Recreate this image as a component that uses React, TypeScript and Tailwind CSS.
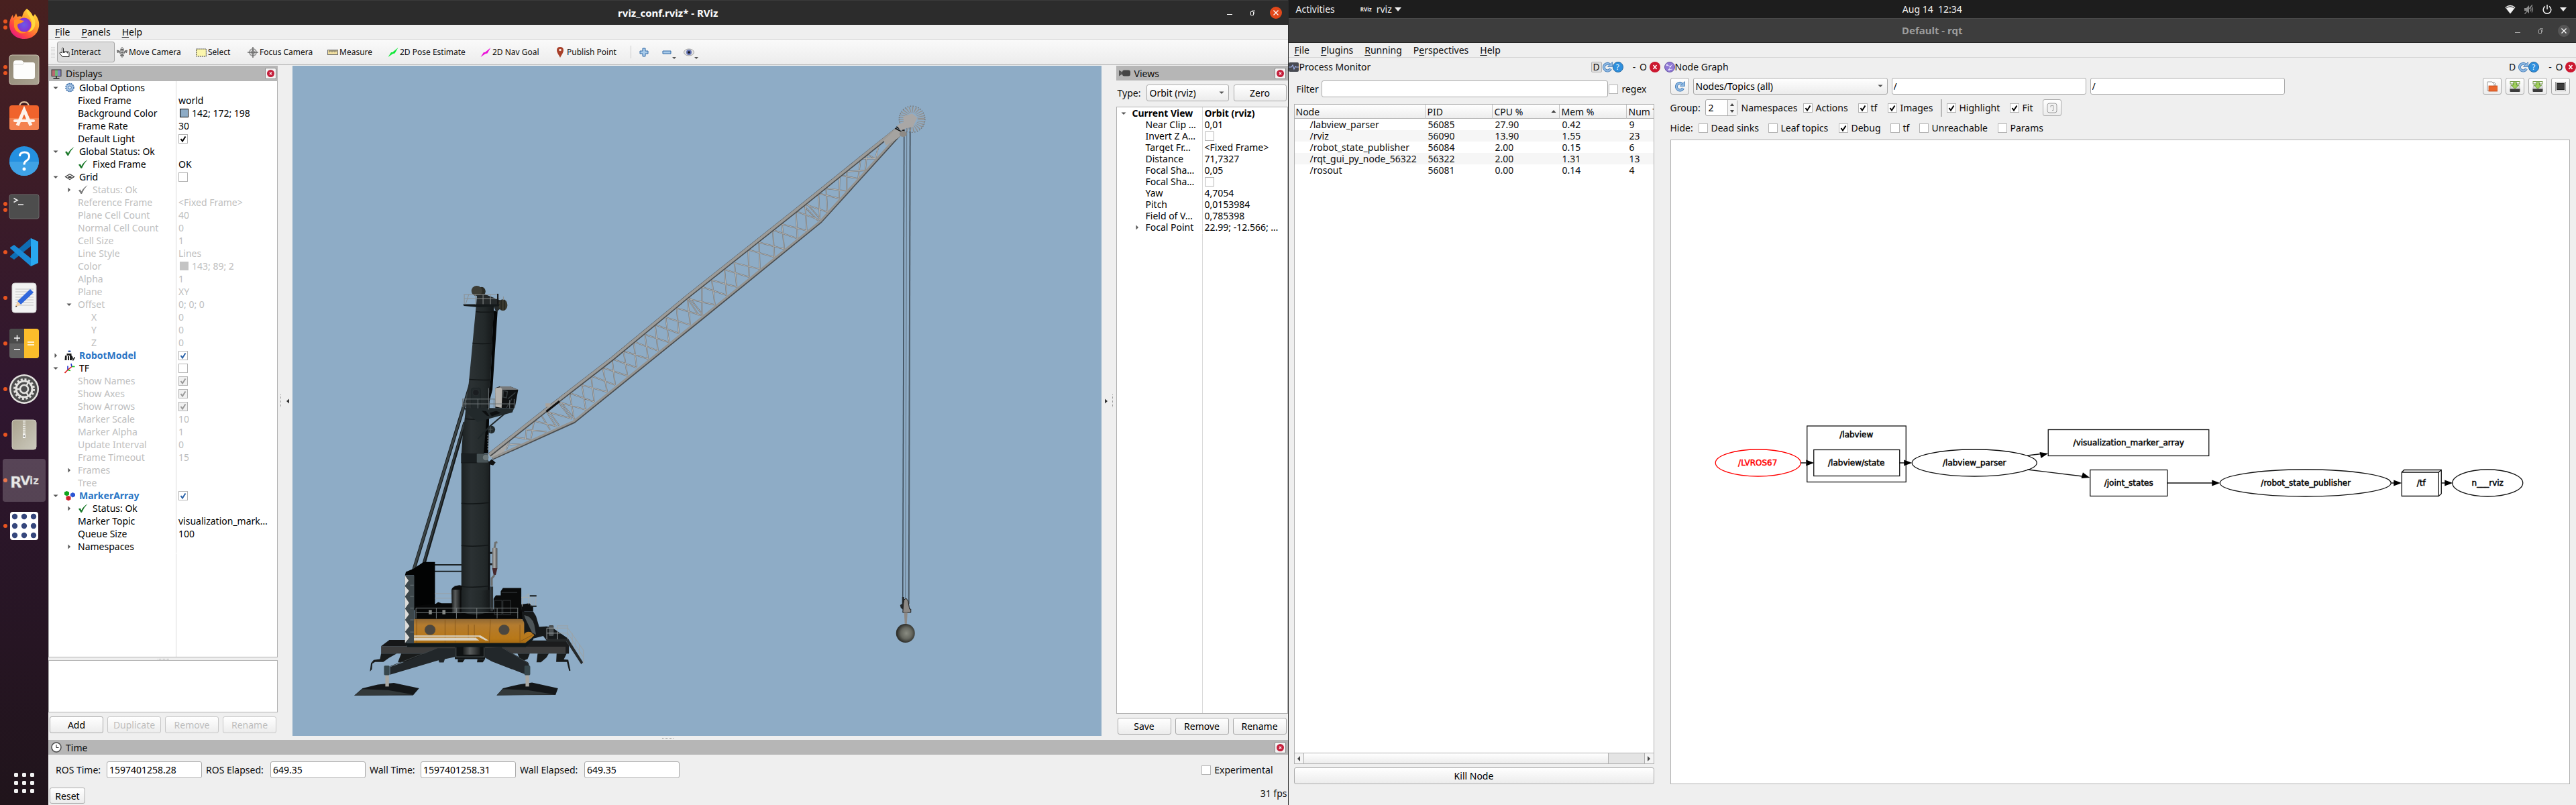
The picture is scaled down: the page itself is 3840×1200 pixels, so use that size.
import type { ReactNode } from "react";

/* ---------- shared controls ---------- */

const BTN =
  "rounded-[3px] border border-[#a9a9a9] bg-gradient-to-b from-white to-[#ececec] text-black disabled:border-[#c6c6c6] disabled:text-[#bebebe]";
const FIELD = "rounded-[3px] border border-[#a9a9a9] bg-white text-black";

function Tick({ label, checked, disabled, blue, name }: { label?: string; checked?: boolean; disabled?: boolean; blue?: boolean; name?: string }) {
  return (
    <label className="flex items-center gap-[5px] whitespace-nowrap">
      <span className="relative block h-[14px] w-[14px] shrink-0">
        <input
          type="checkbox"
          defaultChecked={checked}
          disabled={disabled}
          aria-label={label ? undefined : name}
          className="peer block h-[14px] w-[14px] appearance-none border border-[#b4b4b4] bg-white disabled:bg-[#f0f0f0]"
        />
        <svg
          viewBox="0 0 14 14"
          className={
            "pointer-events-none absolute inset-0 hidden h-[14px] w-[14px] peer-checked:block " +
            (disabled ? "text-[#9a9a9a]" : blue ? "text-[#2a62a8]" : "text-black")
          }
        >
          <path d="M3.5 7 L6 10.5 L10.5 3.5" fill="none" stroke="currentColor" strokeWidth="2" />
        </svg>
      </span>
      {label && <span>{label}</span>}
    </label>
  );
}

function Mn({ children }: { children: string }) {
  const i = children === "Perspectives" ? 1 : 0;
  return (
    <button className="whitespace-nowrap">
      {children.slice(0, i)}
      <span className="underline decoration-1 underline-offset-2">{children[i]}</span>
      {children.slice(i + 1)}
    </button>
  );
}

function PanelClose() {
  return (
    <button aria-label="Close panel" className="flex h-[17px] w-[17px] items-center justify-center rounded-[2px] border border-[#8c8c8c] bg-[#f4f4f4]">
      <svg viewBox="0 0 10 10" className="h-[11px] w-[11px]">
        <circle cx="5" cy="5" r="5" fill="#c4203c" />
        <path d="M3.5 3.5 L6.5 6.5 M6.5 3.5 L3.5 6.5" stroke="#fff" strokeWidth="1.2" />
      </svg>
    </button>
  );
}

function Arrow({ open }: { open?: boolean }) {
  return (
    <svg viewBox="0 0 8 8" className="h-2 w-2">
      <path d={open ? "M0.5 2.5 H7.5 L4 6 Z" : "M2.5 0.5 V7.5 L6 4 Z"} fill="#555" />
    </svg>
  );
}

function Dots({ vertical }: { vertical?: boolean }) {
  return <span className={vertical ? "h-[19px] w-px border-l border-dotted border-[#9c9c9c]" : "h-px w-[17px] border-t border-dotted border-[#9c9c9c]"} />;
}

/* ---------- property tree ---------- */

type Row = {
  n: string;
  lv?: 0 | 1 | 2;
  a?: "open" | "shut";
  icon?: "gear" | "ok" | "okgray" | "grid" | "robot" | "tf" | "markers";
  v?: string;
  sw?: string;
  tick?: "on" | "off" | "dis" | "blue";
  dis?: boolean;
  bold?: boolean;
  blue?: boolean;
};

const DISPLAYS: Row[] = [
  { n: "Global Options", lv: 0, a: "open", icon: "gear" },
  { n: "Fixed Frame", lv: 1, v: "world" },
  { n: "Background Color", lv: 1, v: "142; 172; 198", sw: "border border-black bg-[#8eacc6]" },
  { n: "Frame Rate", lv: 1, v: "30" },
  { n: "Default Light", lv: 1, tick: "on" },
  { n: "Global Status: Ok", lv: 0, a: "open", icon: "ok" },
  { n: "Fixed Frame", lv: 1, icon: "ok", v: "OK" },
  { n: "Grid", lv: 0, a: "open", icon: "grid", tick: "off" },
  { n: "Status: Ok", lv: 1, a: "shut", icon: "okgray", dis: true },
  { n: "Reference Frame", lv: 1, v: "<Fixed Frame>", dis: true },
  { n: "Plane Cell Count", lv: 1, v: "40", dis: true },
  { n: "Normal Cell Count", lv: 1, v: "0", dis: true },
  { n: "Cell Size", lv: 1, v: "1", dis: true },
  { n: "Line Style", lv: 1, v: "Lines", dis: true },
  { n: "Color", lv: 1, v: "143; 89; 2", sw: "bg-[#c4c4c4]", dis: true },
  { n: "Alpha", lv: 1, v: "1", dis: true },
  { n: "Plane", lv: 1, v: "XY", dis: true },
  { n: "Offset", lv: 1, a: "open", v: "0; 0; 0", dis: true },
  { n: "X", lv: 2, v: "0", dis: true },
  { n: "Y", lv: 2, v: "0", dis: true },
  { n: "Z", lv: 2, v: "0", dis: true },
  { n: "RobotModel", lv: 0, a: "shut", icon: "robot", tick: "blue", bold: true, blue: true },
  { n: "TF", lv: 0, a: "open", icon: "tf", tick: "off" },
  { n: "Show Names", lv: 1, tick: "dis", dis: true },
  { n: "Show Axes", lv: 1, tick: "dis", dis: true },
  { n: "Show Arrows", lv: 1, tick: "dis", dis: true },
  { n: "Marker Scale", lv: 1, v: "10", dis: true },
  { n: "Marker Alpha", lv: 1, v: "1", dis: true },
  { n: "Update Interval", lv: 1, v: "0", dis: true },
  { n: "Frame Timeout", lv: 1, v: "15", dis: true },
  { n: "Frames", lv: 1, a: "shut", dis: true },
  { n: "Tree", lv: 1, dis: true },
  { n: "MarkerArray", lv: 0, a: "open", icon: "markers", tick: "blue", bold: true, blue: true },
  { n: "Status: Ok", lv: 1, a: "shut", icon: "ok" },
  { n: "Marker Topic", lv: 1, v: "visualization_mark…" },
  { n: "Queue Size", lv: 1, v: "100" },
  { n: "Namespaces", lv: 1, a: "shut" },
];

const VIEWS: Row[] = [
  { n: "Current View", lv: 0, a: "open", v: "Orbit (rviz)", bold: true },
  { n: "Near Clip …", lv: 1, v: "0,01" },
  { n: "Invert Z A…", lv: 1, tick: "off" },
  { n: "Target Fr…", lv: 1, v: "<Fixed Frame>" },
  { n: "Distance", lv: 1, v: "71,7327" },
  { n: "Focal Sha…", lv: 1, v: "0,05" },
  { n: "Focal Sha…", lv: 1, tick: "off" },
  { n: "Yaw", lv: 1, v: "4,7054" },
  { n: "Pitch", lv: 1, v: "0,0153984" },
  { n: "Field of V…", lv: 1, v: "0,785398" },
  { n: "Focal Point", lv: 1, a: "shut", v: "22.99; -12.566; …" },
];

const INDENT = ["pl-0", "pl-5", "pl-10"];

function RowIcon({ kind }: { kind: NonNullable<Row["icon"]> }) {
  return (
    <svg viewBox="0 0 16 16" className="h-4 w-4">
      {kind === "gear" && (
        <g>
          <circle cx="8" cy="7.5" r="6" fill="#8fb4dc" stroke="#3f6fa8" strokeWidth="1.6" strokeDasharray="2 1.2" />
          <circle cx="8" cy="7.5" r="4.6" fill="#a9c6e6" />
          <circle cx="8" cy="7.5" r="2.4" fill="#dfeaf6" stroke="#3f6fa8" />
        </g>
      )}
      {(kind === "ok" || kind === "okgray") && (
        <path d="M1 8.5 L3.6 7.4 L5.4 10.4 Q8.5 4.5 14.5 1 Q9 6.5 6 14 L4.6 14 Z" fill={kind === "ok" ? "#1d7a2c" : "#7b7b7b"} />
      )}
      {kind === "grid" && (
        <path d="M1.5 7.5 L8 3.5 L14.5 7.5 L8 11.5 Z M4.7 5.5 L11.3 9.5 M11.3 5.5 L4.7 9.5" fill="none" stroke="#3a3a3a" strokeWidth="1.2" />
      )}
      {kind === "robot" && (
        <g fill="#1b1b1b">
          <rect x="5.5" y="0.5" width="4" height="2.6" rx="1" fill="#34539c" />
          <rect x="3.5" y="5" width="7" height="3" />
          <path d="M1 8 h2.5 v7 H0.5 Z M5 9 h2 v6 H5 Z M8 8 h3 v7 H8 Z" />
          <path d="M11 9 L13 14.5 L15.5 10.5" fill="none" stroke="#1b1b1b" strokeWidth="1.6" />
        </g>
      )}
      {kind === "tf" && (
        <g fill="none" strokeWidth="1.6">
          <path d="M0.5 15 L5 10.5" stroke="#e01818" />
          <path d="M5 10.5 V4.5" stroke="#2030d0" />
          <path d="M5 10.5 L9 11.5" stroke="#18c018" />
          <path d="M5 10.5 L11 5.5" stroke="#e01818" />
          <path d="M11 5.5 L10 1" stroke="#2030d0" />
          <path d="M11 5.5 H15.5" stroke="#18c018" />
        </g>
      )}
      {kind === "markers" && (
        <g>
          <path d="M0 2.5 L3.5 1 L7 2.5 V6.5 L3.5 8.5 L0 6.5 Z" fill="#12a41c" />
          <path d="M9 5 L12.5 3 L16 5 V8.5 L12.5 10.5 L9 8.5 Z" fill="#2c55d4" />
          <path d="M2.5 9.5 L6 8 L9.5 9.5 V13.5 L6 15.5 L2.5 13.5 Z" fill="#cf1f2c" />
        </g>
      )}
    </svg>
  );
}

function Tree({ rows, rowH, nameW, edge }: { rows: Row[]; rowH: string; nameW: string; edge: string }) {
  return (
    <div role="tree" className={"flex flex-1 flex-col border-[#b0b0b0] bg-white " + edge}>
      {rows.map((r, i) => (
        <div
          key={i}
          role="treeitem"
          className={"flex " + rowH + (r.dis ? " text-[#bebebe]" : " text-black") + (r.bold ? " font-bold" : "")}
        >
          <div className={"flex shrink-0 items-center overflow-hidden whitespace-nowrap border-r border-[#d9d9d9] " + nameW + " " + INDENT[r.lv ?? 0]}>
            <span className="flex w-5 shrink-0 justify-center">{r.a && <Arrow open={r.a === "open"} />}</span>
            {r.icon && (
              <span className="flex w-[22px] shrink-0 justify-center">
                <RowIcon kind={r.icon} />
              </span>
            )}
            <span className={"pl-[3px] " + (r.blue ? "text-[#2a76c6]" : "")}>{r.n}</span>
          </div>
          <div className="flex min-w-0 flex-1 items-center overflow-hidden whitespace-nowrap pl-[3px]">
            {r.sw && <span className={"mr-[5px] ml-[2px] h-[13px] w-[13px] " + r.sw} />}
            {r.v}
            {r.tick && <Tick name={r.n} checked={r.tick !== "off"} disabled={r.tick === "dis"} blue={r.tick === "blue"} />}
          </div>
        </div>
      ))}
      <div className="flex flex-1 pt-px">
        <div className={"border-r border-[#d9d9d9] " + nameW} />
      </div>
    </div>
  );
}

/* ---------- launcher ---------- */

function DockIcon({ kind }: { kind: string }) {
  return (
    <svg viewBox="0 0 48 48" className="h-12 w-12">
      <defs>
        <linearGradient id="ffo" x1="1" y1="0" x2="0.2" y2="1">
          <stop offset="0" stopColor="#fff14a" />
          <stop offset="0.45" stopColor="#ff9a2a" />
          <stop offset="0.75" stopColor="#ff4a3f" />
          <stop offset="1" stopColor="#e3128a" />
        </linearGradient>
        <radialGradient id="ffp">
          <stop offset="0" stopColor="#6a5be8" />
          <stop offset="1" stopColor="#8a2fd0" />
        </radialGradient>
        <linearGradient id="sand" x1="0" y1="0" x2="1" y2="1">
          <stop offset="0" stopColor="#8f8672" />
          <stop offset="1" stopColor="#aaa392" />
        </linearGradient>
        <linearGradient id="zip" x1="0" y1="0" x2="1" y2="1">
          <stop offset="0" stopColor="#aaa38e" />
          <stop offset="1" stopColor="#cbc9bd" />
        </linearGradient>
      </defs>
      {kind === "firefox" && (
        <g>
          <path d="M28 1 C33 5 36 8 37 13 L40 9 C45 15 47 21 46 28 C44 40 35 46 24 46 C11 46 2 37 2 25 C2 19 4 14 7 10 L8 15 L12 8 L14 13 C16 12 19 12 21 13 C22 8 24 4 28 1 Z" fill="url(#ffo)" />
          <circle cx="24" cy="25" r="10.5" fill="url(#ffp)" />
          <path d="M9 18 C14 15 18 18 24 19 C21 23 17 22 14 25 C14 33 20 36 27 36 C20 40 11 36 9 28 Z" fill="#ff8f22" />
          <path d="M28 1 C26 8 34 13 35 20 C37 28 33 33 29 36 C38 35 42 27 40 18 C38 11 32 7 28 1 Z" fill="#ffd83c" />
        </g>
      )}
      {kind === "files" && (
        <g>
          <rect x="2" y="2" width="44" height="44" rx="4" fill="url(#sand)" stroke="#c9c2b1" />
          <path d="M8 14 q0 -4 4 -4 h8 q2 0 3 3 h14 q3 0 3 3 v18 q0 4 -4 4 H12 q-4 0 -4 -4 Z" fill="#fdfdfc" />
          <path d="M9 16 h13 l2 -2" fill="none" stroke="#d6d6d2" />
        </g>
      )}
      {kind === "software" && (
        <g>
          <path d="M17 12 q0 -8 7 -8 q7 0 7 8" fill="none" stroke="#e9c9a6" strokeWidth="2" />
          <rect x="2" y="9" width="44" height="37" rx="4" fill="#f0632c" />
          <path d="M2 28 h44 v14 q0 4 -4 4 H6 q-4 0 -4 -4 Z" fill="#f4824f" />
          <path d="M14 39 L24 16 L34 39" fill="none" stroke="#fdf3ec" strokeWidth="5" />
          <path d="M10 32 H38" stroke="#fdf3ec" strokeWidth="4" strokeLinecap="round" />
        </g>
      )}
      {kind === "help" && (
        <g>
          <circle cx="24" cy="24" r="22" fill="#2490e0" />
          <path d="M2 25 a22 21 0 0 0 44 0 Z" fill="#3fa2e6" />
          <path d="M17.5 17 q0 -6 7 -6 q7 0 7 6 q0 4 -4 6.5 q-3.5 2 -3.5 6" fill="none" stroke="#fff" strokeWidth="3" />
          <circle cx="24" cy="36" r="2.5" fill="#fff" />
        </g>
      )}
      {kind === "terminal" && (
        <g>
          <rect x="2" y="6" width="44" height="36" rx="3" fill="#4d4d4d" stroke="#6b6b6b" />
          <path d="M8.5 11.5 L14 14.5 L8.5 17.5 M15 21 h8" fill="none" stroke="#eee" strokeWidth="1.6" />
        </g>
      )}
      {kind === "code" && (
        <g>
          <path d="M34 3 L45 8 V40 L34 45 Z" fill="#29a8f0" />
          <path d="M34 3 L34 15 L9 35 L3 31 L3 30 Z" fill="#0f6db3" />
          <path d="M34 45 V33 L9 13 L3 17 V18 Z" fill="#1a8ad6" />
        </g>
      )}
      {kind === "edit" && (
        <g>
          <rect x="6" y="2" width="36" height="44" rx="4" fill="#f2f2f2" stroke="#cfcfcf" />
          <path d="M11 11 h27 M11 15 h27 M11 19 h27 M11 23 h27 M11 27 h27 M11 31 h27 M11 35 h27" stroke="#c3c3c3" />
          <path d="M33 11 L38 16 L19 34 L14 29 Z" fill="#3067dc" />
          <path d="M14 29 L19 34 L11 38 Z" fill="#f2cfa6" />
          <path d="M12 35.5 L13.5 37 L11 38 Z" fill="#222" />
        </g>
      )}
      {kind === "calc" && (
        <g>
          <rect x="2" y="2" width="44" height="44" rx="4" fill="#616161" />
          <path d="M6 2 h18 v22 H2 V6 q0 -4 4 -4" fill="#4b4b4b" />
          <path d="M24 2 h18 q4 0 4 4 v36 q0 4 -4 4 H24 Z" fill="#fbbd2b" />
          <path d="M9 16 h9 M13.5 11.5 v9 M9 33 h9 M29 22 h10 M29 26 h10" stroke="#fff" strokeWidth="1.4" />
        </g>
      )}
      {kind === "settings" && (
        <g>
          <circle cx="24" cy="24" r="22" fill="#e4e3e0" />
          <circle cx="24" cy="24" r="19.5" fill="#4d4d4d" />
          <circle cx="24" cy="24" r="12" fill="none" stroke="#e4e3e0" strokeWidth="3" />
          <circle cx="24" cy="24" r="14.5" fill="none" stroke="#e4e3e0" strokeWidth="3" strokeDasharray="3 2.7" />
          <circle cx="24" cy="24" r="6" fill="none" stroke="#e4e3e0" strokeWidth="2.6" />
          <path d="M19 24 H12 M27 20 L30 14 M27 28 L30 34" stroke="#e4e3e0" strokeWidth="2.4" />
        </g>
      )}
      {kind === "zip" && (
        <g>
          <rect x="6" y="2" width="36" height="44" rx="4" fill="url(#zip)" stroke="#cfccc0" />
          <path d="M24 3 V22" stroke="#efefe9" strokeWidth="4" strokeDasharray="1.5 1.2" />
          <rect x="22" y="22" width="4" height="7" fill="#f7f7f4" />
          <rect x="23.2" y="25" width="1.6" height="2" fill="#777" />
        </g>
      )}
      {kind === "rviz" && (
        <g fontFamily="DejaVu Sans" fontWeight="bold">
          <text x="3" y="35" fontSize="23" fill="#e9e9e9" stroke="#8f8f8f" strokeWidth="0.5">R</text>
          <text x="18" y="31" fontSize="20" fill="#e9e9e9" stroke="#8f8f8f" strokeWidth="0.5">V</text>
          <text x="32" y="30" fontSize="15" fill="#dcdcdc">iz</text>
        </g>
      )}
      {kind === "rqt" && (
        <g>
          <rect x="3" y="3" width="42" height="42" rx="4" fill="#fff" />
          {[10, 24, 38].map((y) => [10, 24, 38].map((x) => <circle key={x + "-" + y} cx={x} cy={y} r="4.2" fill="#35467c" />))}
        </g>
      )}
    </svg>
  );
}

const DOCK: [string, string, number][] = [
  ["firefox", "Firefox", 2],
  ["files", "Files", 2],
  ["software", "Ubuntu Software", 0],
  ["help", "Help", 0],
  ["terminal", "Terminal", 2],
  ["code", "Visual Studio Code", 1],
  ["edit", "Text Editor", 1],
  ["calc", "Calculator", 1],
  ["settings", "Settings", 1],
  ["zip", "Archive Manager", 1],
  ["rviz", "RViz", 1],
  ["rqt", "rqt", 1],
];

function Dock() {
  return (
    <nav className="flex w-[72px] shrink-0 flex-col bg-gradient-to-b from-[#48201f] via-[#2f162f] to-[#20141b] pt-[2px]">
      {DOCK.map(([kind, label, dots]) => (
        <button key={kind} aria-label={label} className="flex h-[68px] items-center">
          <span className="flex w-[11px] shrink-0 flex-col items-end gap-[3px]">
            {dots > 0 && <span className="h-[6px] w-[6px] rounded-full bg-[#e95420]" />}
            {dots > 1 && <span className="h-[6px] w-[6px] rounded-full bg-[#e95420]" />}
          </span>
          <span className={"-ml-[7px] flex h-[64px] w-[64px] items-center justify-center rounded-[4px] " + (kind === "rviz" ? "bg-white/20" : "")}>
            <DockIcon kind={kind} />
          </span>
        </button>
      ))}
      <button aria-label="Show Applications" className="mt-auto mb-[18px] flex justify-center">
        <svg viewBox="0 0 30 30" className="h-[30px] w-[30px]">
          {[0, 12, 24].map((y) => [0, 12, 24].map((x) => <rect key={x + "-" + y} x={x} y={y} width="6" height="6" rx="1.5" fill="#f2f2f2" />))}
        </svg>
      </button>
    </nav>
  );
}

/* ---------- 3D view ---------- */

const TOP: [number, number][] = [[325,1232],[365,1200],[395,1163],[433,1130],[463,1095],[500,1063],[533,1025],[570,997],[603,957],[637,928],[673,890],[708,852],[755,805],[787,778],[828,735],[860,708],[905,655],[940,625],[985,575],[1015,552],[1060,500],[1090,472],[1133,428],[1158,408],[1202,355],[1225,340],[1270,288],[1290,270],[1330,228]];
const BOT: [number, number][] = [[340,1340],[378,1300],[405,1268],[447,1228],[473,1200],[513,1163],[543,1130],[580,1095],[612,1062],[648,1028],[680,992],[717,958],[755,920],[797,877],[835,838],[868,805],[908,765],[943,733],[990,685],[1022,652],[1065,610],[1095,578],[1138,535],[1162,503],[1200,448],[1225,418],[1262,368],[1285,335],[1318,288]];

const LATTICE = TOP.map((t, i) => {
  const steep = BOT[i];
  const flat = BOT[Math.min(i + 2, BOT.length - 1)];
  return `M${t[0]} ${t[1]} L${steep[0]} ${steep[1]} M${t[0]} ${t[1]} L${flat[0]} ${flat[1]}`;
}).join(" ");

const JOINTS =
  " M288 1268 L332 1338 M296 1268 L342 1338 M708 850 L745 920 M714 848 L758 918 M1085 478 L1132 538 M1096 470 L1140 532 M250 1307 L282 1368 M256 1303 L292 1365 M250 1307 L330 1335 M288 1268 L378 1300 M210 1345 L200 1415 M210 1345 L285 1367 M185 1380 L250 1388 M145 1410 L200 1420 M185 1380 L182 1420 M235 1325 L262 1380 M130 1425 L120 1460 M130 1440 L165 1438";

function Boom() {
  const v = { vectorEffect: "non-scaling-stroke" as const, fill: "none" };
  return (
    <g transform="translate(700 130) scale(0.45918 0.3699)">
      <path {...v} d={LATTICE + JOINTS} stroke="#6f7377" strokeWidth="2" />
      <path {...v} d={LATTICE + JOINTS} stroke="#b4b2ae" strokeWidth="1" />
      <path d="M62 1482 L130 1425 L112 1470 L75 1496 Z" fill="#a9a8a6" />
      <path {...v} d="M75 1497 L340 1349 L760 927 L1140 543 L1402 185" stroke="#4a4d4f" strokeWidth="4" />
      <path {...v} d="M75 1494 L340 1345 L760 923 L1140 539 L1400 183" stroke="#969592" strokeWidth="3" />
      <path {...v} d="M65 1482 L250 1300 L463 1095 L705 847 L1060 497 L1270 287 L1386 172" stroke="#4a4d4f" strokeWidth="6" />
      <path {...v} d="M64 1480 L250 1298 L463 1093 L705 845 L1060 495 L1270 285 L1385 170" stroke="#9c9b98" strokeWidth="4" />
      <path {...v} d="M250 1307 L292 1266" stroke="#111" strokeWidth="3" />
      <rect x="247" y="1274" width="16" height="14" fill="#a9a39c" />
      <path d="M1345 215 L1385 168 L1412 182 L1392 205 L1352 235 Z" fill="#a5a3a0" />
      <g transform="translate(1437 129)">
        <ellipse rx="30" ry="38" fill="none" stroke="#938e8a" strokeWidth="24" strokeDasharray="3 5" />
        <ellipse rx="42" ry="53" fill="none" stroke="#6f6f6e" strokeWidth="3" strokeDasharray="4 5" />
      </g>
      <path {...v} d="M1382 165 L1408 182 M1386 160 L1412 176" stroke="#1a1a1a" strokeWidth="2" />
      <path d="M1388 155 L1410 140 L1408 118 L1437 106 L1454 122 L1440 160 L1420 165 L1400 175 Z" fill="#a9a7a6" />
      <ellipse cx="1408" cy="188" rx="12" ry="12" fill="#8d8a86" />
    </g>
  );
}

function Tower() {
  const v = { vectorEffect: "non-scaling-stroke" as const, fill: "none" };
  return (
    <g transform="translate(500 400) scale(0.33333 0.42092)">
      {/* backstays */}
      <path {...v} d="M612 393 L350 1070" stroke="#15191b" strokeWidth="5" />
      <path {...v} d="M612 393 L350 1068" stroke="#3b4446" strokeWidth="3" />
      <path {...v} d="M580 545 L395 1050" stroke="#15191b" strokeWidth="5" />
      <path {...v} d="M578 545 L394 1048" stroke="#343c3e" strokeWidth="2" />
      <path {...v} d="M395 1050 H565 M345 1073 H590" stroke="#1d2426" strokeWidth="2" />
      {/* mast */}
      <path d="M630 132 H710 L694 400 L666 660 L692 690 V1225 H564 V660 L569 600 L598 400 Z" fill="url(#mast)" />
      <path d="M708 150 L726 150 L703 430 L690 470 L684 655 H664 L680 500 L694 400 Z" fill="#050606" />
      <path d="M688 690 H692 V1215 H684 Z" fill="#0b0d0e" />
      <path {...v} d="M628 153 q45 4 82 0 M614 265 q45 4 86 0 M600 393 q50 4 92 2 M582 533 q50 4 90 0 M564 832 q60 5 124 -2 M564 982 q60 5 126 -2 M564 1127 q60 5 126 -2" stroke="#121617" strokeWidth="1.5" />
      <rect x="564" y="657" width="72" height="32" fill="#1a1f21" stroke="#0c0e0f" />
      <rect x="633" y="657" width="50" height="31" fill="#485356" />
      <ellipse cx="673" cy="670" rx="13" ry="10" fill="#6f7a7c" />
      <path d="M688 684 L700 676 L717 688 L706 698 L688 694 Z" fill="#101112" />
      {/* mast head */}
      <ellipse cx="655" cy="82" rx="17" ry="16" fill="#2b2c26" />
      <ellipse cx="633" cy="80" rx="24" ry="18" fill="#3d3d35" />
      <path d="M634 95 L670 92 L735 112 L764 116 L760 148 L735 145 L720 155 L708 134 H630 Z" fill="#25292a" />
      <ellipse cx="750" cy="130" rx="20" ry="20" fill="#3a392f" />
      <path {...v} d="M742 112 v36 M756 112 v36" stroke="#1b1b18" strokeWidth="1" />
      <path d="M572 127 H735 L732 134 L640 138 L575 133 Z" fill="#14191a" />
      <path {...v} d="M575 93 H730 M577 108 H735 M577 93 V127 M597 93 L583 127 M627 93 V127 M661 93 V127 M694 93 V127 M727 93 V127 M752 100 V112" stroke="#8c9090" strokeWidth="1" />
      <path {...v} d="M727 90 V128" stroke="#111" strokeWidth="2" />
      {/* cab */}
      <rect x="608" y="424" width="42" height="72" rx="8" fill="#22292b" stroke="#14191a" />
      <ellipse cx="629" cy="440" rx="14" ry="11" fill="#1a1d20" stroke="#3a3f40" />
      <path d="M715 424 L735 418 H782 L818 430 L803 495 H716 Z" fill="#101213" />
      <path d="M715 424 L748 420 L744 494 L716 490 Z" fill="#b4b2ae" />
      <path d="M735 418 H782 L818 430 L750 430 Z" fill="#77797a" />
      <path {...v} d="M752 433 L770 436 L766 458 L750 456 Z M772 462 L806 440 M765 495 L790 462" stroke="#343a3c" strokeWidth="1.5" />
      <path d="M578 495 H800 L792 510 L715 527 L636 544 L586 510 Z" fill="#22292b" />
      <path d="M690 512 L720 505 L740 512 L700 524 Z M655 504 l20 2 l15 18 l-12 -2 z" fill="#0d0f10" />
      <path {...v} d="M568 463 H715 M568 480 H800 M570 463 V492 M584 463 V492 M638 463 V496 M710 463 V496 M686 424 V500 M780 466 V496 M800 463 V496" stroke="#6e7577" strokeWidth="1" />
      <path {...v} d="M762 512 L690 560 L638 604" stroke="#1f2628" strokeWidth="2" />
      <ellipse cx="698" cy="571" rx="17" ry="14" fill="#22292b" />
      <path {...v} d="M686 570 h18 M694 560 v22" stroke="#596264" strokeWidth="1" />
      <path {...v} d="M682 590 V645 M689 590 V645" stroke="#9aa2a5" strokeWidth="1" strokeDasharray="2 2" />
      {/* chassis */}
      <path d="M205 1338 H1045 V1364 H205 Z" fill="#3c3c3c" />
      <path d="M205 1338 L242 1316 H320 V1338 Z" fill="#161718" />
      <path d="M820 1340 L880 1318 H1030 L1045 1335 V1364 L1030 1364 V1340 Z" fill="#1b1c1d" />
      <path d="M205 1364 H275 L240 1380 L215 1394 L178 1394 L166 1400 L164 1420 L155 1428 L160 1398 L172 1387 L200 1384 Z" fill="#191b1b" />
      <path d="M295 1364 H420 L340 1395 L280 1395 Z M815 1364 H870 L860 1384 L830 1392 Z M905 1364 H955 L945 1378 L920 1395 H900 Z M990 1364 H1035 L1022 1385 L1042 1386 L1052 1424 L1046 1426 L1036 1394 H988 Z" fill="#191b1b" />
      <path d="M456 1345 H536 V1376 L490 1384 L485 1396 H465 L462 1388 L245 1439 V1412 L330 1388 Z" fill="#22272a" />
      <path d="M668 1345 L745 1342 L862 1395 L870 1412 L850 1438 L700 1392 L668 1378 Z" fill="#22272a" />
      <path {...v} d="M245 1410 L456 1345 M745 1343 L866 1400" stroke="#3a4144" strokeWidth="1" />
      <path d="M548 1384 H580 L570 1395 H548 Z M636 1384 H670 L660 1395 H634 Z" fill="#151717" />
      <rect x="535" y="1340" width="135" height="44" fill="#0f1213" />
      <rect x="572" y="1340" width="76" height="28" fill="url(#cyl)" />
      <path {...v} d="M540 1342 V1378 M540 1376 H666 M666 1342 V1378" stroke="#5b6467" strokeWidth="1" />
      {/* outriggers */}
      <path d="M85 1513 L122 1487 L190 1474 L262 1468 L375 1487 L348 1512 Z M722 1512 L750 1487 L820 1474 L880 1467 L996 1487 L985 1511 Z" fill="#141719" />
      <path d="M85 1513 L122 1490 L236 1494 L350 1510 Z M722 1512 L750 1490 L860 1494 L985 1510 Z" fill="#33393a" />
      <rect x="224" y="1436" width="16" height="45" fill="#aaa9a4" />
      <rect x="851" y="1436" width="16" height="45" fill="#aaa9a4" />
      <rect x="218" y="1407" width="25" height="34" rx="4" fill="#37474c" />
      <rect x="846" y="1407" width="26" height="34" rx="4" fill="#37474c" />
      {/* counterweight */}
      <path d="M312 1087 L316 1075 L350 1064 L395 1040 H446 V1210 H352 V1087 Z" fill="#020303" />
      <rect x="312" y="1088" width="41" height="239" fill="#3d474b" />
      <path d="M312 1088 l16 18 l-16 18 z M312 1126 l18 16 l-18 20 z M312 1163 l18 22 l-18 20 z M312 1205 l18 20 l-18 20 z M312 1245 l20 22 l-20 20 z M312 1287 l20 20 l-20 20 z" fill="#dcdcda" />
      <path {...v} d="M335 1122 h16 M335 1162 h16 M335 1203 h16 M335 1245 h16 M335 1288 h16" stroke="#6d777a" strokeWidth="1" />
      {/* deck equipment */}
      <path {...v} d="M445 1152 H525 M445 1168 H525" stroke="#9aa1a3" strokeWidth="1" />
      <path d="M355 1195 L450 1188 L460 1182 L475 1186 H640 L708 1208 H845 V1243 H355 Z" fill="#060707" />
      <path d="M520 1138 Q522 1126 555 1122 L566 1124 V1225 H522 Z" fill="#0b0c0c" />
      <rect x="522" y="1138" width="36" height="82" fill="url(#cyl)" />
      <path d="M564 1140 H692 V1215 Q630 1235 564 1218 Z" fill="url(#mast)" />
      <path d="M740 1144 L750 1132 H832 V1215 H740 Z M708 1170 L718 1158 H818 V1232 H708 Z" fill="#0a0b0b" />
      <path {...v} d="M712 1176 h33 v50 h-33 z M750 1176 h35 v50 h-35 z M744 1148 h70" stroke="#34383a" strokeWidth="1" />
      <path {...v} d="M712 992 L716 972 L725 970" stroke="#6f7170" strokeWidth="3" />
      <rect x="702" y="990" width="23" height="74" rx="3" fill="url(#steel)" />
      <path d="M702 1062 H725 L718 1086 H708 Z" fill="#47282b" />
      <path {...v} d="M713 1086 L700 1098 V1125" stroke="#6c6f70" strokeWidth="3" />
      <path {...v} d="M700 1127 V1215" stroke="#2c3133" strokeWidth="4" />
      <path {...v} d="M690 1008 h12 M690 1048 h12" stroke="#1c2022" strokeWidth="3" />
      <path {...v} d="M361 1203 H818 M361 1220 H818 M361 1203 V1240 M452 1203 V1240 M542 1203 V1240 M633 1203 V1240 M724 1203 V1240 M816 1203 V1240" stroke="#757b7c" strokeWidth="1" />
      <path d="M418 1210 h14 v15 h-14 z M479 1210 h14 v15 h-14 z" fill="#858885" />
      <path d="M832 1190 L868 1186 L885 1200 V1215 H832 Z" fill="#0c0d0e" />
      <path {...v} d="M836 1198 V1170 L865 1152 V1190 M832 1165 H870 M875 1162 V1196 M885 1162 V1196 M897 1162 V1196" stroke="#a7abab" strokeWidth="1" />
      <path {...v} d="M870 1160 H900 M872 1197 H900" stroke="#15191a" strokeWidth="2" />
      {/* machinery house */}
      <path d="M834 1215 H885 L898 1232 L912 1270 L945 1268 L970 1272 L1040 1310 L1045 1318 H945 L930 1302 L890 1310 L845 1300 Z" fill="#16191a" />
      <path d="M845 1228 Q880 1232 890 1262 L898 1298 L880 1290 L850 1240 Z" fill="#4c5457" />
      <path d="M352 1242 H830 Q846 1246 845 1262 V1298 Q850 1284 875 1288 L890 1300 L850 1328 H352 Z" fill="url(#orange)" />
      <path {...v} d="M364 1244 V1325 M491 1244 V1325 M536 1244 V1325 M595 1262 V1318 M622 1262 V1318 M694 1244 L689 1325 M826 1262 V1325 M830 1320 L888 1296" stroke="#8a5a1c" strokeWidth="1" />
      <path d="M352 1300 H650 L686 1318 H672 L640 1305 H352 Z M352 1308 H628 L644 1318 H352 Z" fill="#d9d3c4" />
      <ellipse cx="424" cy="1280" rx="24" ry="18" fill="#4b4740" stroke="#7a5a2c" />
      <ellipse cx="755" cy="1280" rx="24" ry="18" fill="#4b4740" stroke="#7a5a2c" />
      <path d="M315 1327 H850 L890 1302 L886 1314 L852 1341 H322 Z" fill="#10181a" />
      {/* access stairs */}
      <rect x="955" y="1264" width="22" height="38" rx="4" fill="#4b5052" />
      <path d="M945 1312 H1042 L1108 1395 L1100 1402 L1034 1322 H945 Z" fill="#26292a" />
      <path {...v} d="M946 1274 H1040 L1110 1352 V1400 M946 1292 H1040 L1108 1375 M946 1274 V1314 M994 1266 V1314 M1040 1266 V1314 M1060 1292 V1335 M1076 1312 V1352 M1092 1332 V1372 M992 1266 H1042" stroke="#9da3a4" strokeWidth="1" />
    </g>
  );
}

function Scene() {
  return (
    <svg viewBox="436 98 1206 999" preserveAspectRatio="xMidYMid slice" className="absolute inset-0 h-full w-full" role="img" aria-label="Harbour crane model">
      <defs>
        <linearGradient id="mast">
          <stop offset="0" stopColor="#1c2122" />
          <stop offset="0.3" stopColor="#2b3133" />
          <stop offset="0.7" stopColor="#23292a" />
          <stop offset="1" stopColor="#141718" />
        </linearGradient>
        <linearGradient id="cyl">
          <stop offset="0" stopColor="#1d2020" />
          <stop offset="0.4" stopColor="#5a5d5d" />
          <stop offset="1" stopColor="#1a1c1c" />
        </linearGradient>
        <linearGradient id="steel">
          <stop offset="0" stopColor="#5d5e5f" />
          <stop offset="0.4" stopColor="#b1b0ae" />
          <stop offset="1" stopColor="#4a4b4c" />
        </linearGradient>
        <linearGradient id="orange" x1="0" y1="0" x2="0" y2="1">
          <stop offset="0" stopColor="#8f6834" />
          <stop offset="0.25" stopColor="#b47c2f" />
          <stop offset="0.8" stopColor="#b87818" />
          <stop offset="1" stopColor="#a56a12" />
        </linearGradient>
        <radialGradient id="ball" cx="0.55" cy="0.5">
          <stop offset="0" stopColor="#8a8c82" />
          <stop offset="0.6" stopColor="#65675f" />
          <stop offset="1" stopColor="#2f302c" />
        </radialGradient>
      </defs>
      <g fill="none">
        <path d="M1348 190 L1346 896" stroke="#3b4956" strokeWidth="1.5" />
        <path d="M1352 190 L1350 896" stroke="#5d6f80" strokeWidth="1" />
        <path d="M1357 185 L1355 900" stroke="#4c5b68" strokeWidth="2" />
      </g>
      <Tower />
      <Boom />
      <path d="M1345 890 L1348 890 L1350 912 L1343 906 L1342 902 L1345 900 Z" fill="#24282b" />
      <path d="M1348 894 L1351 892 L1354 896 L1356 908 H1358 V913 H1346 L1347 900 Z" fill="#8c8884" stroke="#1d1d1d" />
      <path d="M1348 913 H1353 L1352 931 H1349 Z" fill="#8d8985" />
      <circle cx="1350" cy="944" r="14" fill="url(#ball)" />
    </svg>
  );
}

/* ---------- RViz window ---------- */

const TOOLS: { label: string; w: string; art: ReactNode; on?: boolean }[] = [
  {
    label: "Interact",
    w: "w-[86px]",
    on: true,
    art: <path d="M4.5 9 V2 q1 -1.5 2 0 V7 q1 -1 2 0 q1 -1 2 0 q1 -1 2 0 q2 -0.5 2.5 1 V14.5 H5 L1 9.5 q0 -2 2 -1.5 Z M6.5 7 v2 M8.5 7 v2 M10.5 7 v2 M12.5 7.5 v2" fill="#fff" stroke="#222" />,
  },
  {
    label: "Move Camera",
    w: "w-[118px]",
    art: (
      <g fill="#e6e6e6" stroke="#5a5a5a">
        <path d="M8 0.5 L10.5 3.5 H5.5 Z M8 15.5 L5.5 12.5 H10.5 Z M0.5 5 L4 6 L1.5 9 Z M15.5 5 L12 6 L14.5 9 Z" />
        <circle cx="8" cy="8" r="3.5" />
        <path d="M1 6 Q8 11 15 6 M8 3 V13" fill="none" />
      </g>
    ),
  },
  { label: "Select", w: "w-[77px]", art: <rect x="0.7" y="3" width="14.6" height="11" fill="#fbf6ae" stroke="#333" strokeDasharray="2 1" /> },
  {
    label: "Focus Camera",
    w: "w-[119px]",
    art: (
      <g fill="none" stroke="#6a6a6a">
        <circle cx="8" cy="8" r="5" strokeWidth="2" stroke="#9a9a9a" />
        <circle cx="8" cy="8" r="2.5" />
        <path d="M8 0 V16 M0 8 H16" strokeWidth="1.5" />
      </g>
    ),
  },
  {
    label: "Measure",
    w: "w-[90px]",
    art: (
      <g>
        <rect x="0.5" y="4.5" width="15" height="7" fill="#f1dfa0" stroke="#6b6b6b" />
        <path d="M3 5 v3 M5 5 v2 M7 5 v3 M9 5 v2 M11 5 v3 M13 5 v2" stroke="#555" />
      </g>
    ),
  },
  { label: "2D Pose Estimate", w: "w-[138px]", art: <path d="M0.5 15 L5 8 L7 8 L15.5 1 L10.5 9.5 L8 10 L7 10.5 Z" fill="#10e838" /> },
  { label: "2D Nav Goal", w: "w-[111px]", art: <path d="M0.5 15 L5 8 L7 8 L15.5 1 L10.5 9.5 L8 10 L7 10.5 Z" fill="#ea10d8" /> },
  {
    label: "Publish Point",
    w: "w-[112px]",
    art: (
      <g>
        <path d="M8 0 Q13 0 13 5 Q13 8 9 14 L8 16 L7 14 Q3 8 3 5 Q3 0 8 0 Z" fill="#a8402a" />
        <circle cx="8" cy="4.5" r="1.8" fill="#fbe5de" />
      </g>
    ),
  },
];

function WinButtons({ active }: { active?: boolean }) {
  const ink = active ? "#ffffff" : "#a8a8a8";
  return (
    <div className="flex items-center">
      <button aria-label="Minimize" className="flex h-5 w-[34px] items-center justify-center">
        <svg viewBox="0 0 10 10" className="h-[10px] w-[10px]"><path d="M1 7.5 H9" stroke={ink} /></svg>
      </button>
      <button aria-label="Restore" className="flex h-5 w-[34px] items-center justify-center">
        <svg viewBox="0 0 10 10" className="h-[10px] w-[10px]"><path d="M2.5 3.5 h4 v5 h-4 z" fill="none" stroke={ink} /><path d="M4 1.5 H8.5 V7" fill="none" stroke="#8a8a8a" /></svg>
      </button>
      <span className="flex w-9 justify-center">
        <button aria-label="Close" className={"flex h-[18px] w-[18px] items-center justify-center rounded-full " + (active ? "bg-[#e2481a]" : "bg-[#565656]")}>
          <svg viewBox="0 0 10 10" className="h-[10px] w-[10px]"><path d="M1.5 1.5 L8.5 8.5 M8.5 1.5 L1.5 8.5" stroke="#fff" strokeWidth="1.3" /></svg>
        </button>
      </span>
    </div>
  );
}

function TimeField({ label, value, w }: { label: string; value: string; w: string }) {
  return (
    <label className="flex items-center gap-[6px] whitespace-nowrap">
      <span className={w}>{label}</span>
      <input readOnly defaultValue={value} className={"h-[25px] w-[142px] px-[3px] " + FIELD} />
    </label>
  );
}

function RVizWindow() {
  return (
    <section className="flex min-w-0 flex-1 flex-col bg-[#efefef]">
      <header className="grid h-[37px] grid-cols-[1fr_auto_1fr] items-center border-t border-[#3b3b3b] bg-[#2c2c2c] text-white">
        <span />
        <h1 className="text-[15px] font-bold">rviz_conf.rviz* - RViz</h1>
        <div className="flex justify-end"><WinButtons active /></div>
      </header>
      <nav className="flex h-[22px] items-center gap-[17px] border-b border-[#d3d3d3] pl-[10px]">
        <Mn>File</Mn><Mn>Panels</Mn><Mn>Help</Mn>
      </nav>
      <div className="flex h-[38px] items-center border-b border-[#b4b4b4] bg-gradient-to-b from-[#fafafa] to-[#ececec] pl-[5px] text-[12px]">
        <span className="mr-1 h-4 w-1 border-x border-dotted border-[#a0a0a0]" />
        {TOOLS.map((t) => (
          <button
            key={t.label}
            className={"flex h-[31px] items-center gap-[2px] whitespace-nowrap rounded-[3px] border pl-[2px] " + t.w + (t.on ? " border-[#a2a2a2] bg-[#dcdcdc]" : " border-transparent")}
          >
            <svg viewBox="0 0 16 16" className="h-4 w-4 shrink-0">{t.art}</svg>
            {t.label}
          </button>
        ))}
        <span className="ml-[4px] h-[19px] w-px bg-[#cbcbcb]" />
        <button aria-label="Add tool" className="ml-3">
          <svg viewBox="0 0 14 14" className="h-[14px] w-[14px]"><path d="M5 1 h4 v4 h4 v4 h-4 v4 h-4 v-4 h-4 v-4 h4 z" fill="#a9cbea" stroke="#2c66a4" /></svg>
        </button>
        <button aria-label="Remove tool" className="ml-5 flex h-[22px]">
          <svg viewBox="0 0 22 22" className="h-[22px] w-[22px]"><path d="M1 9 h12 v4 h-12 z" fill="#a9cbea" stroke="#2c66a4" /><path d="M15 18 h6 l-3 3 z" fill="#555" /></svg>
        </button>
        <button aria-label="Tool display" className="ml-[10px] flex h-[22px]">
          <svg viewBox="0 0 24 22" className="h-[22px] w-6"><ellipse cx="8" cy="11" rx="7.5" ry="5" fill="#e4e4e4" stroke="#a0a0a0" /><circle cx="8" cy="11" r="4" fill="#6372b4" /><circle cx="8" cy="11" r="1.8" fill="#111" /><path d="M16 18 h6 l-3 3 z" fill="#555" /></svg>
        </button>
      </div>

      <div className="flex min-h-0 flex-1 pt-px">
        <section className="flex w-[342px] shrink-0 flex-col">
          <header className="flex h-[23px] shrink-0 items-center bg-[#b6b6b6] pr-[2px] pl-1">
            <svg viewBox="0 0 16 16" className="mr-[6px] h-4 w-4">
              <rect x="0.5" y="1.5" width="15" height="10.5" fill="#333" />
              <rect x="1.5" y="2.5" width="4.5" height="8.5" fill="#b86a72" /><rect x="6" y="2.5" width="4" height="8.5" fill="#6fb878" /><rect x="10" y="2.5" width="4.5" height="8.5" fill="#8684c4" />
              <path d="M3.5 15 h9 M8 12 v3" stroke="#222" strokeWidth="1.5" />
            </svg>
            <h2 className="flex-1">Displays</h2>
            <PanelClose />
          </header>
          <Tree rows={DISPLAYS} rowH="h-[19px]" nameW="w-[190px]" edge="border-x border-b" />
          <div className="flex h-1 items-center justify-center"><Dots /></div>
          <div className="h-[78px] border border-[#b0b0b0] bg-white" />
          <div className="grid h-[35px] grid-cols-4 gap-[6px] px-[2px] pt-[6px] pb-1">
            <button className={BTN}>Add</button>
            <button disabled className={BTN}>Duplicate</button>
            <button disabled className={BTN}>Remove</button>
            <button disabled className={BTN}>Rename</button>
          </div>
        </section>
        <div className="flex w-[22px] shrink-0 items-center justify-center gap-[7px]"><Dots vertical /><CollapseArrow dir="left" /></div>
        <div className="relative min-w-0 flex-1 bg-[#8eacc6]"><Scene /></div>
        <div className="flex w-[22px] shrink-0 items-center gap-[6px] pl-1"><CollapseArrow dir="right" /><Dots vertical /></div>
        <section className="flex w-[256px] shrink-0 flex-col">
          <header className="flex h-[22px] items-center bg-[#b6b6b6] pr-[3px] pl-1">
            <svg viewBox="0 0 17 12" className="mr-[6px] h-3 w-[17px]"><path d="M0 1.5 L5 4.5 V7.5 L0 10.5 Z" fill="#555" /><rect x="5" y="1.5" width="12" height="9" rx="3" fill="#454545" /></svg>
            <h2 className="flex-1">Views</h2>
            <PanelClose />
          </header>
          <div className="flex h-[39px] items-center gap-[7px] pt-[6px] pr-[2px] pb-2 pl-[2px]">
            <label htmlFor="vtype" className="w-9">Type:</label>
            <span className="relative flex">
              <select id="vtype" className={"h-[25px] w-[123px] appearance-none pl-1 " + BTN}><option>Orbit (rviz)</option></select>
              <span className="pointer-events-none absolute top-[8px] right-[7px]"><Arrow open /></span>
            </span>
            <button className={"h-[25px] flex-1 " + BTN}>Zero</button>
          </div>
          <Tree rows={VIEWS} rowH="h-[17px]" nameW="w-[128px]" edge="border" />
          <div className="grid h-[33px] grid-cols-3 gap-[6px] px-[2px] pt-[6px] pb-[2px]">
            <button className={BTN}>Save</button><button className={BTN}>Remove</button><button className={BTN}>Rename</button>
          </div>
        </section>
      </div>

      <div className="flex h-[6px] items-center justify-center"><Dots /></div>
      <section>
        <header className="flex h-[22px] items-center bg-[#b6b6b6] pr-[3px] pl-1">
          <svg viewBox="0 0 16 16" className="mr-[6px] h-4 w-4"><circle cx="8" cy="8" r="7" fill="#fff" stroke="#4a4a4a" strokeWidth="1.5" /><path d="M8 4 V8.5 H11.5" fill="none" stroke="#222" /></svg>
          <h2 className="flex-1">Time</h2>
          <PanelClose />
        </header>
        <div className="flex items-center gap-[6px] pt-[10px] pr-[22px] pl-[11px]">
          <TimeField label="ROS Time:" value="1597401258.28" w="w-[70px]" />
          <TimeField label="ROS Elapsed:" value="649.35" w="w-[90px]" />
          <TimeField label="Wall Time:" value="1597401258.31" w="w-[70px]" />
          <TimeField label="Wall Elapsed:" value="649.35" w="w-[90px]" />
          <div className="ml-auto"><Tick label="Experimental" /></div>
        </div>
        <div className="flex items-start justify-between pt-[14px] pr-px pb-[2px] pl-[2px]">
          <button className={"h-[24px] w-[53px] " + BTN}>Reset</button>
          <span>31 fps</span>
        </div>
      </section>
    </section>
  );
}

function CollapseArrow({ dir }: { dir: "left" | "right" }) {
  return (
    <button aria-label="Collapse panel">
      <svg viewBox="0 0 6 8" className="h-2 w-[6px]"><path d={dir === "left" ? "M5 0.5 V7.5 L1 4 Z" : "M1 0.5 V7.5 L5 4 Z"} fill="#333" /></svg>
    </button>
  );
}

/* ---------- rqt window ---------- */

const PROCS = [
  ["/labview_parser", "56085", "27.90", "0.42", "9"],
  ["/rviz", "56090", "13.90", "1.55", "23"],
  ["/robot_state_publisher", "56084", "2.00", "0.15", "6"],
  ["/rqt_gui_py_node_56322", "56322", "2.00", "1.31", "13"],
  ["/rosout", "56081", "0.00", "0.14", "4"],
];

function Reload() {
  return (
    <svg viewBox="0 0 16 16" className="h-4 w-4">
      <path d="M13 10.5 A5.3 5.3 0 1 1 11.5 4" fill="none" stroke="#3f78b4" strokeWidth="4" />
      <path d="M13 10.5 A5.3 5.3 0 1 1 11.5 4" fill="none" stroke="#8db8e2" strokeWidth="2.4" />
      <path d="M15.5 0.5 V7.5 H8.5 Z" fill="#8db8e2" stroke="#3f78b4" strokeWidth="0.8" />
    </svg>
  );
}

function DockTitle({ icon, title, pressed }: { icon: ReactNode; title: string; pressed?: boolean }) {
  return (
    <header className="flex h-[17px] items-center whitespace-nowrap">
      {icon}
      <h2 className="flex-1">{title}</h2>
      <button className={"h-4 w-4 " + (pressed ? "rounded-[2px] border border-[#b4b4b4] bg-[#dedede] leading-[14px]" : "leading-4")}>D</button>
      <button aria-label="Reload"><Reload /></button>
      <button aria-label="Help" className="mr-[12px] h-4 w-4 rounded-full border border-[#2467a0] bg-[#2f90de] text-[11px] leading-[14px] text-white">?</button>
      <button aria-label="Undock" className="w-[9px]">-</button>
      <button aria-label="Float" className="w-[18px]">O</button>
      <button aria-label="Close" className="flex h-4 w-4 items-center justify-center rounded-full bg-[#cc1830]">
        <svg viewBox="0 0 8 8" className="h-2 w-2"><path d="M1.5 1 L6.5 7 M6.5 1 L1.5 7" stroke="#fff" strokeWidth="1.6" /></svg>
      </button>
    </header>
  );
}

function ProcessMonitor() {
  return (
    <section className="flex w-[554px] shrink-0 flex-col">
      <DockTitle
        pressed
        title="Process Monitor"
        icon={<svg viewBox="0 0 16 16" className="h-4 w-4"><rect y="1" width="15" height="14" rx="2" fill="#474a52" /><path d="M0 8 h4 l2 -3 l2 6 l2 -4 l1 1 h4" fill="none" stroke="#9fb0e8" strokeWidth="1.2" /></svg>}
      />
      <div className="flex flex-1 flex-col pr-[9px] pl-2">
        <div className="flex items-center pt-3 pr-[11px] pl-1">
          <label htmlFor="filter" className="w-[37px]">Filter</label>
          <input id="filter" className={"mr-px h-[25px] min-w-0 flex-1 px-1 " + FIELD} />
          <Tick label="regex" />
        </div>
        <div className="mt-[10px] flex flex-1 flex-col overflow-hidden border border-[#b0b0b0] bg-white">
          <div className="flex-1 overflow-hidden">
            <table className="w-[636px] table-fixed border-separate border-spacing-0 text-left">
              <colgroup><col className="w-[195px]" /><col className="w-[100px]" /><col className="w-[100px]" /><col className="w-[100px]" /><col className="w-[141px]" /></colgroup>
              <thead>
                <tr className="h-[21px] bg-gradient-to-b from-white to-[#ececec]">
                  {["Node", "PID", "CPU %", "Mem %", "Num Threads"].map((h) => (
                    <th key={h} className={"border-r border-b border-r-[#c2c2c2] border-b-[#b0b0b0] p-0 font-normal whitespace-nowrap " + (h === "Node" ? "pl-[2px]" : "pl-[3px]")}>
                      <span className="flex items-center justify-between pr-1">
                        {h}
                        {h === "CPU %" && <svg viewBox="0 0 8 6" className="h-[6px] w-2"><path d="M0.5 5 L4 1 L7.5 5 Z" fill="#444" /></svg>}
                      </span>
                    </th>
                  ))}
                </tr>
              </thead>
              <tbody>
                {PROCS.map((r) => (
                  <tr key={r[0]} className="h-[17px] leading-[17px] even:bg-[#f6f6f6]">
                    {r.map((c, i) => (
                      <td key={i} className={"whitespace-nowrap p-0 " + (i === 0 ? "pl-[23px]" : "pl-1")}>{c}</td>
                    ))}
                  </tr>
                ))}
              </tbody>
            </table>
          </div>
          <div className="flex h-4 border-t border-[#b0b0b0] bg-[#e4e4e4]">
            <button aria-label="Scroll left" className="flex w-[14px] items-center justify-center border-r border-[#b0b0b0] bg-[#f4f4f4]"><ScrollArrow dir="left" /></button>
            <div className="mr-[53px] flex-1 border-r border-[#b0b0b0] bg-gradient-to-b from-white to-[#ececec]" />
            <button aria-label="Scroll right" className="flex w-[14px] items-center justify-center border-l border-[#b0b0b0] bg-[#f4f4f4]"><ScrollArrow dir="right" /></button>
          </div>
        </div>
        <button className={"mt-[5px] mb-[31px] h-[25px] " + BTN}>Kill Node</button>
      </div>
    </section>
  );
}

function ScrollArrow({ dir }: { dir: "left" | "right" }) {
  return <svg viewBox="0 0 6 8" className="h-2 w-[6px]"><path d={dir === "left" ? "M5 0 V8 L1 4 Z" : "M1 0 V8 L5 4 Z"} fill="#444" /></svg>;
}

function GLabel({ x, y, children, fill = "#000" }: { x: number; y: number; children: string; fill?: string }) {
  return (
    <text x={x} y={y} fill={fill} stroke={fill} strokeWidth="0.5" fontSize="12" textAnchor="middle" fontFamily="DejaVu Sans">{children}</text>
  );
}

function Graph() {
  const heads: [number, number, number][] = [[2704, 690, 0], [2850, 690, 0], [3053, 676, -12], [3115, 712, 16], [3309, 720, 0], [3580, 720, 0], [3656, 720, 0]];
  return (
    <svg viewBox="2491 209 1339 959" preserveAspectRatio="xMidYMid meet" className="absolute inset-0 h-full w-full" role="img" aria-label="Node graph">
      <g fill="none" stroke="#111" strokeWidth="1.3">
        <ellipse cx="2620.5" cy="690" rx="63.5" ry="20" stroke="#f00" />
        <rect x="2693.5" y="635" width="147.5" height="83.5" />
        <rect x="2703.5" y="670.5" width="128" height="39" />
        <ellipse cx="2943" cy="690" rx="93" ry="20" />
        <rect x="3053" y="640.5" width="239.5" height="39" />
        <rect x="3115.5" y="700.5" width="115" height="39" />
        <ellipse cx="3436.5" cy="720" rx="127.5" ry="20" />
        <path d="M3580 704 H3635 V739.5 H3580 Z M3580 704 L3583.5 700.5 H3639 V736 L3635 739.5 M3635 704 L3639 700.5" />
        <ellipse cx="3708" cy="720" rx="52.5" ry="20" />
        <path d="M2684 690 H2692 M2831 690 H2840 M3022 679 L3043 676.5 M3022 700 L3104 710 M3230 720 H3298 M3564 720 H3570 M3639 720 H3646" />
      </g>
      {heads.map(([x, y, a]) => (
        <path key={x} d={`M${x} ${y} l-12 -4.5 v9 z`} transform={`rotate(${a} ${x} ${y})`} fill="#000" />
      ))}
      <GLabel x={2620} y={694} fill="#f00">/LVROS67</GLabel>
      <GLabel x={2767} y={652}>/labview</GLabel>
      <GLabel x={2767} y={694}>/labview/state</GLabel>
      <GLabel x={2943} y={694}>/labview_parser</GLabel>
      <GLabel x={3173} y={664}>/visualization_marker_array</GLabel>
      <GLabel x={3173} y={724}>/joint_states</GLabel>
      <GLabel x={3437} y={724}>/robot_state_publisher</GLabel>
      <GLabel x={3609} y={724}>/tf</GLabel>
      <GLabel x={3708} y={724}>n___rviz</GLabel>
    </svg>
  );
}

const SQ = "flex h-[25px] w-7 items-center justify-center " + BTN;

function SaveIcon() {
  return (
    <svg viewBox="0 0 16 16" className="h-4 w-4">
      <rect x="1" y="0.5" width="14" height="3.5" fill="#f4f4f4" stroke="#7aa04c" />
      <path d="M2 5 H14 L15.5 12 H0.5 Z" fill="#d8d8d8" stroke="#a2a2a2" strokeWidth="0.6" />
      <rect x="0.5" y="11.5" width="15" height="4.5" rx="1" fill="#3c3c3c" />
      <path d="M5.5 2 h5 v4 h3 L8 11.5 L2.5 6 h3 Z" fill="#9fd05a" stroke="#5b8f24" strokeWidth="0.8" />
    </svg>
  );
}

function NodeGraph() {
  return (
    <section className="flex min-w-0 flex-1 flex-col">
      <DockTitle
        title="Node Graph"
        icon={<svg viewBox="0 0 16 16" className="h-4 w-4"><circle cx="8" cy="8" r="7.5" fill="#8f78d4" stroke="#6a58a4" /><path d="M4 5 L9 7 L12 4 M9 7 L7 12 L12 11" fill="none" stroke="#e0d8f8" /><circle cx="4" cy="5" r="1.3" fill="#e8e2fa" /><circle cx="9" cy="7" r="1.3" fill="#e8e2fa" /><circle cx="7" cy="12" r="1.3" fill="#e8e2fa" /></svg>}
      />
      <div className="flex flex-1 flex-col px-[9px]">
        <div className="flex items-center gap-[6px] pt-2">
          <button aria-label="Refresh graph" className={SQ}><Reload /></button>
          <span className="relative flex">
            <select aria-label="Graph type" className={"h-[25px] w-[290px] appearance-none pl-[3px] " + BTN}><option>Nodes/Topics (all)</option></select>
            <span className="pointer-events-none absolute top-[8px] right-[7px]"><Arrow open /></span>
          </span>
          <input aria-label="Node filter" defaultValue="/" className={"h-[25px] w-[290px] px-[2px] " + FIELD} />
          <input aria-label="Topic filter" defaultValue="/" className={"h-[25px] w-[290px] px-[2px] " + FIELD} />
          <span className="flex-1" />
          <button aria-label="Open" className={SQ}>
            <svg viewBox="0 0 16 16" className="h-4 w-4"><path d="M1 1 h7 l3 3 v10 H1 Z" fill="#fff" stroke="#9a9a9a" /><path d="M8 2 h3 l2 2 v4" fill="none" stroke="#9a9a9a" /><rect x="3" y="7" width="13" height="8" fill="#e9672e" stroke="#bf4716" strokeWidth="0.8" /></svg>
          </button>
          <button aria-label="Save as DOT" className={SQ}><SaveIcon /></button>
          <button aria-label="Save as SVG" className={SQ}><SaveIcon /></button>
          <button aria-label="Save as image" className={SQ}>
            <svg viewBox="0 0 16 16" className="h-4 w-4"><rect x="0.5" y="1.5" width="15" height="13" fill="#fff" stroke="#9a9a9a" /><rect x="2.5" y="3.5" width="11" height="9" fill="#3c3c3c" stroke="#222" /></svg>
          </button>
        </div>
        <div className="mt-[7px] flex h-[25px] items-center whitespace-nowrap">
          <label htmlFor="group" className="w-[52px]">Group:</label>
          <span className="relative mr-[6px] flex">
            <input id="group" defaultValue="2" className={"h-[25px] w-12 pl-1 " + FIELD} />
            <span className="pointer-events-none absolute inset-y-px right-px flex w-[14px] flex-col items-center justify-center gap-[6px] border-l border-[#b0b0b0] bg-[#f4f4f4]">
              <svg viewBox="0 0 6 4" className="h-1 w-[6px]"><path d="M0 4 L3 0 L6 4 Z" fill="#444" /></svg>
              <svg viewBox="0 0 6 4" className="h-1 w-[6px]"><path d="M0 0 L3 4 L6 0 Z" fill="#444" /></svg>
            </span>
          </span>
          <span className="w-[92px]">Namespaces</span>
          <span className="w-[82px]"><Tick label="Actions" checked /></span>
          <span className="w-11"><Tick label="tf" checked /></span>
          <span className="w-[79px]"><Tick label="Images" checked /></span>
          <span className="mr-[7px] h-[26px] w-[2px] bg-[#b8b8b8]" />
          <span className="w-[94px]"><Tick label="Highlight" checked /></span>
          <span className="w-[49px]"><Tick label="Fit" checked /></span>
          <button aria-label="Fit in view" className={SQ}>
            <svg viewBox="0 0 16 16" className="h-4 w-4"><rect x="1" y="1" width="14" height="14" rx="3" fill="#f2f2f2" stroke="#9c9c9c" /><path d="M6 7 V4.5 H10 V11.5 H8" fill="none" stroke="#a4a4a4" /></svg>
          </button>
        </div>
        <div className="flex h-[35px] items-center whitespace-nowrap">
          <span className="w-[42px]">Hide:</span>
          <span className="w-[104px]"><Tick label="Dead sinks" /></span>
          <span className="w-[105px]"><Tick label="Leaf topics" /></span>
          <span className="w-[77px]"><Tick label="Debug" checked /></span>
          <span className="w-[43px]"><Tick label="tf" /></span>
          <span className="w-[117px]"><Tick label="Unreachable" /></span>
          <Tick label="Params" />
        </div>
        <div className="relative mb-[31px] flex-1 border border-[#b0b0b0] bg-white"><Graph /></div>
      </div>
    </section>
  );
}

function RqtScreen() {
  return (
    <section className="flex min-w-0 flex-1 flex-col border-l border-[#2a2a2a] bg-[#efefef]">
      <header className="grid h-[27px] grid-cols-[1fr_auto_1fr] items-center bg-[#1d1d1d] text-[#f0f0f0]">
        <div className="flex items-center pl-[11px]">
          <button>Activities</button>
          <span className="ml-[38px] text-[8px] leading-4 font-bold">RViz</span>
          <button className="ml-[7px] flex items-center gap-1">rviz
            <svg viewBox="0 0 10 6" className="h-[6px] w-[10px]"><path d="M0 0 H10 L5 6 Z" fill="#f0f0f0" /></svg>
          </button>
        </div>
        <span className="whitespace-pre">Aug 14  12:34</span>
        <div className="flex items-center justify-end pr-[14px]">
          <svg viewBox="0 0 16 14" className="h-[14px] w-4"><path d="M0.5 4 Q8 -2.5 15.5 4 L8 13.5 Z" fill="#f4f4f4" /><path d="M2 5 Q8 0.5 14 5" fill="none" stroke="#1d1d1d" /></svg>
          <svg viewBox="0 0 16 14" className="ml-3 h-[14px] w-4"><path d="M1 5 h3 L8 1 V13 L4 9 H1 Z" fill="#8d8d8d" /><path d="M10 4 q2 3 0 6 M12 2.5 q3 4.5 0 9 M1.5 14 L13 0" fill="none" stroke="#8d8d8d" strokeWidth="1.2" /></svg>
          <svg viewBox="0 0 14 14" className="ml-3 h-[14px] w-[14px]"><path d="M4 2.5 A5.8 5.8 0 1 0 10 2.5 M7 0 V7" fill="none" stroke="#f0f0f0" strokeWidth="1.5" /></svg>
          <svg viewBox="0 0 10 6" className="ml-3 h-[6px] w-[10px]"><path d="M0 0 H10 L5 6 Z" fill="#f0f0f0" /></svg>
        </div>
      </header>
      <header className="grid h-[37px] grid-cols-[1fr_auto_1fr] items-center border-t border-b border-t-[#4a4a4a] border-b-[#242424] bg-[#3d3d3d] text-[#9c9c9c]">
        <span />
        <h1 className="text-[15px] font-bold">Default - rqt</h1>
        <div className="flex justify-end"><WinButtons /></div>
      </header>
      <nav className="flex h-[22px] items-center gap-[17px] border-b border-[#d3d3d3] pl-[9px]">
        <Mn>File</Mn><Mn>Plugins</Mn><Mn>Running</Mn><Mn>Perspectives</Mn><Mn>Help</Mn>
      </nav>
      <div className="flex flex-1 gap-[6px] pt-[5px]">
        <ProcessMonitor />
        <NodeGraph />
      </div>
    </section>
  );
}

export default function App() {
  return (
    <main className="flex min-h-screen font-['Noto_Sans',sans-serif] text-[14px] leading-[17px] text-[#0c0c0c]">
      <div className="flex min-w-0 flex-1">
        <Dock />
        <RVizWindow />
      </div>
      <RqtScreen />
    </main>
  );
}
